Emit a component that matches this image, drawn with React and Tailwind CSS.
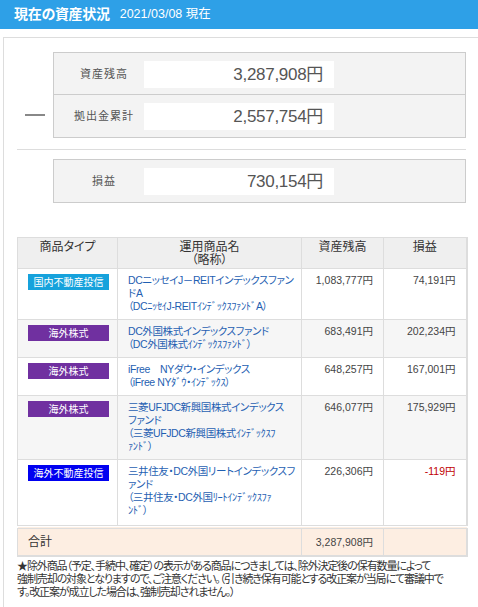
const FONT = "font-['Liberation_Sans','Noto_Sans_CJK_JP',sans-serif]";

const rows = [
  {
    type: '国内不動産投信',
    badge: 'bg-[#16a2dc]',
    name: ['DCニッセイJ－REITインデックスファン', 'ドA', '（DCﾆｯｾｲJ-REITｲﾝﾃﾞｯｸｽﾌｧﾝﾄﾞA）'],
    balance: '1,083,777円',
    profit: '74,191円',
    bg: 'bg-white',
  },
  {
    type: '海外株式',
    badge: 'bg-[#7030a0]',
    name: ['DC外国株式インデックスファンド', '（DC外国株式ｲﾝﾃﾞｯｸｽﾌｧﾝﾄﾞ）'],
    balance: '683,491円',
    profit: '202,234円',
    bg: 'bg-[#f6f6f6]',
  },
  {
    type: '海外株式',
    badge: 'bg-[#7030a0]',
    name: ['iFree　NYダウ・インデックス', '（iFree NYﾀﾞｳ・ｲﾝﾃﾞｯｸｽ）'],
    balance: '648,257円',
    profit: '167,001円',
    bg: 'bg-white',
  },
  {
    type: '海外株式',
    badge: 'bg-[#7030a0]',
    name: ['三菱UFJDC新興国株式インデックス', 'ファンド', '（三菱UFJDC新興国株式ｲﾝﾃﾞｯｸｽﾌ', 'ｧﾝﾄﾞ）'],
    balance: '646,077円',
    profit: '175,929円',
    bg: 'bg-[#f6f6f6]',
  },
  {
    type: '海外不動産投信',
    badge: 'bg-[#0000f0]',
    name: ['三井住友・DC外国リートインデックスフ', 'ァンド', '（三井住友・DC外国ﾘｰﾄｲﾝﾃﾞｯｸｽﾌｧ', 'ﾝﾄﾞ）'],
    balance: '226,306円',
    profit: '-119円',
    negative: true,
    bg: 'bg-white',
  },
];

const SummaryRow = ({ label, value, last }) => (
  <div className={`flex h-[42px] items-start pt-[8px] ${last ? '' : 'border-b border-[#cccccc]'}`}>
    <div className="w-[90px] pl-[10px] h-[27px] flex items-center justify-center text-[11px] tracking-[1px] text-[#555]">
      {label}
    </div>
    <div className="w-[190px] h-[27px] bg-white flex items-center justify-end pr-[11px] text-[17px] text-[#555] tracking-[-0.3px]">
      {value}
    </div>
  </div>
);

const Line = ({ children }) => <div className="h-[13px] leading-[13px]">{children}</div>;

export default function App() {
  return (
    <div className={`w-[478px] h-[607px] overflow-hidden bg-white ${FONT} [font-feature-settings:'palt']`}>
      {/* title bar */}
      <div className="h-[29px] bg-[#2ea0e7] flex items-center pl-[14px] gap-[10px] text-white">
        <span className="text-[14px] font-bold tracking-[-0.3px]">現在の資産状況</span>
        <span className="text-[12.5px]">2021/03/08 現在</span>
      </div>

      <div className="mt-[8px] ml-[3px] w-[500px] h-[580px] border border-[#dddddd] pl-[13px] pt-[14px]">
        <div className="w-[449px]">
          {/* balance vs contributions */}
          <div className="flex">
            <div className="w-[36px] flex flex-col">
              <div className="h-[42px]" />
              <div className="h-[42px] flex items-center justify-center">
                <div className="w-[20px] h-[2px] bg-[#888]" />
              </div>
            </div>
            <div className="w-[413px] border border-[#cccccc] bg-[#f3f3f3]">
              <SummaryRow label="資産残高" value="3,287,908円" />
              <SummaryRow label="拠出金累計" value="2,557,754円" last />
            </div>
          </div>

          <div className="mt-[11px] border-t border-[#dddddd]" />

          <div className="flex mt-[9px]">
            <div className="w-[36px]" />
            <div className="w-[413px] border border-[#cccccc] bg-[#f3f3f3]">
              <SummaryRow label="損益" value="730,154円" last />
            </div>
          </div>

          {/* holdings table */}
          <table className="mt-[34px] w-[449px] table-fixed border-collapse text-[11px] leading-[13px] text-[#333] border-r-2 border-b-2 border-[#dddddd]">
            <colgroup>
              <col className="w-[100px]" />
              <col className="w-[184px]" />
              <col className="w-[82px]" />
              <col className="w-[83px]" />
            </colgroup>
            <thead>
              <tr className="bg-[#efefef]">
                <th className="border border-[#dddddd] font-normal text-[12px] align-top pt-[3px] pb-[1px]">
                  <Line>商品タイプ</Line>
                </th>
                <th className="border border-[#dddddd] font-normal text-[12px] align-top pt-[3px] pb-[1px]">
                  <Line>運用商品名</Line>
                  <Line>（略称）</Line>
                </th>
                <th className="border border-[#dddddd] font-normal text-[12px] align-top pt-[3px] pb-[1px]">
                  <Line>資産残高</Line>
                </th>
                <th className="border border-[#dddddd] font-normal text-[12px] align-top pt-[3px] pb-[1px]">
                  <Line>損益</Line>
                </th>
              </tr>
            </thead>
            <tbody>
              {rows.map((r, i) => (
                <tr key={i} className={r.bg}>
                  <td className="border border-[#dddddd] align-top pt-[5px] pl-[10px]">
                    <div className={`w-[81px] h-[16px] ${r.badge} text-white text-[10px] flex items-center justify-center`}>
                      {r.type}
                    </div>
                  </td>
                  <td className={`border border-[#dddddd] align-top pl-[10px] pt-[5px] ${i === rows.length - 1 ? 'pb-[8px]' : 'pb-[6px]'} text-[10.5px] text-[#1f5fb2] whitespace-nowrap tracking-[-0.4px]`}>
                    {r.name.map((l, j) => (
                      <Line key={j}>{l}</Line>
                    ))}
                  </td>
                  <td className="border border-[#dddddd] align-top pt-[5px] pr-[10px] text-right text-[10.5px] text-[#444]">
                    <Line>{r.balance}</Line>
                  </td>
                  <td className={`border border-[#dddddd] align-top pt-[5px] pr-[10px] text-right text-[10.5px] ${r.negative ? 'text-[#c00000]' : 'text-[#444]'}`}>
                    <Line>{r.profit}</Line>
                  </td>
                </tr>
              ))}
              <tr className="bg-[#fdeee2] border-t-4 border-double border-[#dddddd]">
                <td colSpan={2} className="border border-[#dddddd] pl-[10px] text-[12px] h-[29px]">
                  <Line>合計</Line>
                </td>
                <td className="border border-[#dddddd] pr-[10px] text-right text-[10.5px] text-[#444]">
                  <Line>3,287,908円</Line>
                </td>
                <td className="border border-[#dddddd]" />
              </tr>
            </tbody>
          </table>

          <div className="mt-[3px] text-[11px] tracking-[-1.1px] text-[#333] whitespace-nowrap">
            <Line>★除外商品（予定、手続中、確定）の表示がある商品につきましては、除外決定後の保有数量によって</Line>
            <Line>強制売却の対象となりますので、ご注意ください。（引き続き保有可能とする改正案が当局にて審議中で</Line>
            <Line>す。改正案が成立した場合は、強制売却されません。）</Line>
          </div>
        </div>
      </div>
    </div>
  );
}
